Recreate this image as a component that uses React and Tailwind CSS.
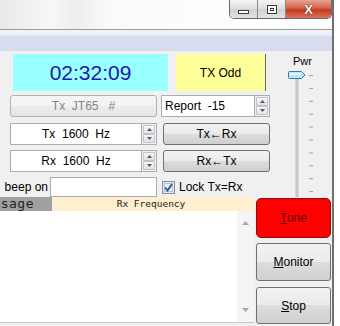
import React from "react";

const btn =
  "flex items-center justify-center rounded-[3px] border border-[#707070] bg-[linear-gradient(to_bottom,#f2f2f2_0%,#ebebeb_49%,#dddddd_50%,#cfcfcf_100%)] text-[12px] text-black";

function Spinner() {
  return (
    <div className="flex h-full w-[15px] flex-col border border-l-0 border-[#abadb3] bg-[#f0f0f0] p-[1px]">
      <div className="flex flex-1 items-center justify-center rounded-[1px] border border-[#c4c4c4] bg-[linear-gradient(to_bottom,#f6f6f6,#e2e2e2)]">
        <svg width="5" height="3" viewBox="0 0 5 3"><path d="M0 3 L2.5 0 L5 3 Z" fill="#4a5a78" /></svg>
      </div>
      <div className="flex flex-1 items-center justify-center rounded-[1px] border border-[#c4c4c4] bg-[linear-gradient(to_bottom,#f6f6f6,#e2e2e2)]">
        <svg width="5" height="3" viewBox="0 0 5 3"><path d="M0 0 L2.5 3 L5 0 Z" fill="#4a5a78" /></svg>
      </div>
    </div>
  );
}

function Slider() {
  const ticks = [];
  for (let i = 0; i < 10; i++) ticks.push(24 + i * 12.9);
  return (
    <svg width="47" height="146" viewBox="0 0 47 146" className="block">
      <text x="8" y="14" fontSize="11" fontFamily="Liberation Sans, Arial, sans-serif" fill="#000">Pwr</text>
      <rect x="11" y="21" width="2" height="125" fill="#d6d6d6" stroke="#a8a8a8" strokeWidth="0.6" />
      {ticks.map((y, i) => (
        <rect key={i} x="24" y={y} width="4" height="1" fill="#a0a0a0" />
      ))}
      <path d="M4.5 20.5 H16.5 L20 24 L16.5 27.5 H4.5 Q3.5 27.5 3.5 26.5 V21.5 Q3.5 20.5 4.5 20.5 Z" fill="#bfe6f7" stroke="#2f7fb0" strokeWidth="1" />
      <rect x="5" y="22" width="11" height="2" fill="#e8f7fd" />
    </svg>
  );
}

export default function App() {
  return (
    <div
      className="flex h-[326px] w-[340px] overflow-hidden bg-white"
      style={{ fontFamily: '"Liberation Sans", Arial, sans-serif' }}
    >
      <div className="flex w-[332px] flex-col">
        {/* Title bar */}
        <div className="relative h-[29px] bg-[linear-gradient(to_right,#e9e9e9_0%,#f7f7f7_15%,#eeeeee_22%,#fbfbfb_35%,#ffffff_100%)]">
          <div className="absolute right-0 top-0 flex h-[19px] overflow-hidden rounded-b-[5px] border border-t-0 border-[#6b6b6b]">
            <div className="flex w-[28px] items-center justify-center border-r border-[#8a8a8a] bg-[linear-gradient(to_bottom,#f4f4f4,#dcdcdc_50%,#cfcfcf_51%,#e3e3e3)]">
              <div className="mt-[5px] h-[4px] w-[11px] border border-[#3c3c3c] bg-white" />
            </div>
            <div className="flex w-[28px] items-center justify-center border-r border-[#8a8a8a] bg-[linear-gradient(to_bottom,#f4f4f4,#dcdcdc_50%,#cfcfcf_51%,#e3e3e3)]">
              <div className="flex h-[9px] w-[10px] items-center justify-center border border-[#3c3c3c] bg-white">
                <div className="h-[3px] w-[4px] border border-[#3c3c3c]" />
              </div>
            </div>
            <div className="flex w-[45px] items-center justify-center bg-[linear-gradient(to_bottom,#e8a493,#d5634b_45%,#c4391f_55%,#d9745d)]">
              <span className="text-[13px] font-bold leading-none text-white [text-shadow:0_0_1px_#5a1a10,0_0_1px_#5a1a10]">X</span>
            </div>
          </div>
        </div>
        {/* Menu bar */}
        <div className="h-[22px] border-t border-[#9a9a9a] bg-[linear-gradient(to_bottom,#f3f4f9_0%,#eceff7_25%,#d8deed_30%,#d6dcec_100%)]" />
        {/* Content */}
        <div className="flex flex-1 flex-col bg-[#f0f0f0]">
          {/* Top section */}
          <div className="flex h-[146px]">
            <div className="flex w-[285px] flex-col pt-[3px]">
              {/* row 1 */}
              <div className="flex h-[37px]">
                <div className="ml-[13px] flex w-[155px] items-center justify-center bg-[#99ffff] text-[21px] text-[#1c1ca0]">
                  02:32:09
                </div>
                <div className="ml-[8px] flex w-[90px] items-center justify-center border-r border-[#6a6a6a] bg-[#ffff99] text-[12px] text-black">
                  TX Odd
                </div>
              </div>
              {/* row 2 */}
              <div className="mt-[4px] flex h-[22px]">
                <div className="ml-[10px] flex w-[147px] items-center justify-center whitespace-pre rounded-[3px] border border-[#adb2b5] bg-[linear-gradient(to_bottom,#f4f4f4,#f4f4f4_50%,#ececec_51%,#e5e5e5)] text-[12px] text-[#838383]">
                  {"Tx  JT65   #"}
                </div>
                <div className="ml-[4px] flex w-[109px] bg-white">
                  <div className="flex flex-1 items-center whitespace-pre border border-[#abadb3] pl-[3px] text-[12px] text-black">
                    {"Report  -15"}
                  </div>
                  <Spinner />
                </div>
              </div>
              {/* row 3 */}
              <div className="mt-[6px] flex h-[22px]">
                <div className="ml-[10px] flex w-[132px] items-center justify-center whitespace-pre border border-[#abadb3] bg-white text-[12px] text-black">
                  {"Tx  1600  Hz"}
                </div>
                <Spinner />
                <div className={"ml-[6px] w-[107px] " + btn}>Tx←Rx</div>
              </div>
              {/* row 4 */}
              <div className="mt-[5px] flex h-[22px]">
                <div className="ml-[10px] flex w-[132px] items-center justify-center whitespace-pre border border-[#abadb3] bg-white text-[12px] text-black">
                  {"Rx  1600  Hz"}
                </div>
                <Spinner />
                <div className={"ml-[6px] w-[107px] " + btn}>Rx←Tx</div>
              </div>
              {/* row 5 */}
              <div className="mt-[5px] flex h-[20px] items-center">
                <div className="w-[50px] pr-[2px] text-right text-[12px] text-black">beep on</div>
                <div className="h-[20px] w-[107px] border border-[#abadb3] bg-white" />
                <div className="ml-[5px] flex items-center">
                  <svg width="13" height="13" viewBox="0 0 13 13">
                    <rect x="0.5" y="0.5" width="12" height="12" fill="#dfe9f5" stroke="#8e8f8f" />
                    <rect x="2.5" y="2.5" width="8" height="8" fill="#e8eef8" stroke="#b3c2d6" />
                    <path d="M3 6.5 L5.5 9.5 L10 3" fill="none" stroke="#2a4f99" strokeWidth="1.8" />
                  </svg>
                  <span className="ml-[4px] text-[12px] text-black">Lock Tx=Rx</span>
                </div>
              </div>
            </div>
            <div className="w-[47px]">
              <Slider />
            </div>
          </div>
          {/* Bottom section */}
          <div className="flex flex-1">
            <div className="flex w-[254px] flex-col">
              <div className="flex h-[14px]">
                <div
                  className="flex w-[52px] items-center justify-end overflow-hidden bg-[#a0a0a0] pr-[18px] text-[13px] tracking-[0.5px] text-[#222]"
                  style={{ fontFamily: '"DejaVu Sans Mono", monospace' }}
                >
                  sage
                </div>
                <div
                  className="flex flex-1 items-center justify-center bg-[#feefcf] pr-[4px] text-[9.5px] text-[#222]"
                  style={{ fontFamily: '"DejaVu Sans Mono", monospace' }}
                >
                  Rx Frequency
                </div>
              </div>
              <div className="flex h-[112px] border-b border-[#c8c8c8] bg-white">
                <div className="flex-1" />
                <div className="flex w-[17px] flex-col items-center justify-between bg-[#f5f5f5] py-[10px]">
                  <svg width="7" height="4" viewBox="0 0 7 4"><path d="M0 4 L3.5 0 L7 4 Z" fill="#a8a8a8" /></svg>
                  <svg width="7" height="4" viewBox="0 0 7 4"><path d="M0 0 L3.5 4 L7 0 Z" fill="#a8a8a8" /></svg>
                </div>
              </div>
            </div>
            <div className="ml-[2px] flex w-[75px] flex-col">
              <div className="mt-[1px] flex h-[40px] items-center justify-center rounded-[5px] border border-[#8a1010] bg-[#ff0000] text-[12px] text-[#5a0000]">
                <span><span className="underline">T</span>une</span>
              </div>
              <div className={"mt-[5px] h-[38px] " + btn}>
                <span><span className="underline">M</span>onitor</span>
              </div>
              <div className={"mt-[6px] h-[37px] " + btn}>
                <span><span className="underline">S</span>top</span>
              </div>
            </div>
          </div>
        </div>
      </div>
      <div className="w-[2px] bg-[#707070]" />
      <div className="flex-1 bg-white" />
    </div>
  );
}
